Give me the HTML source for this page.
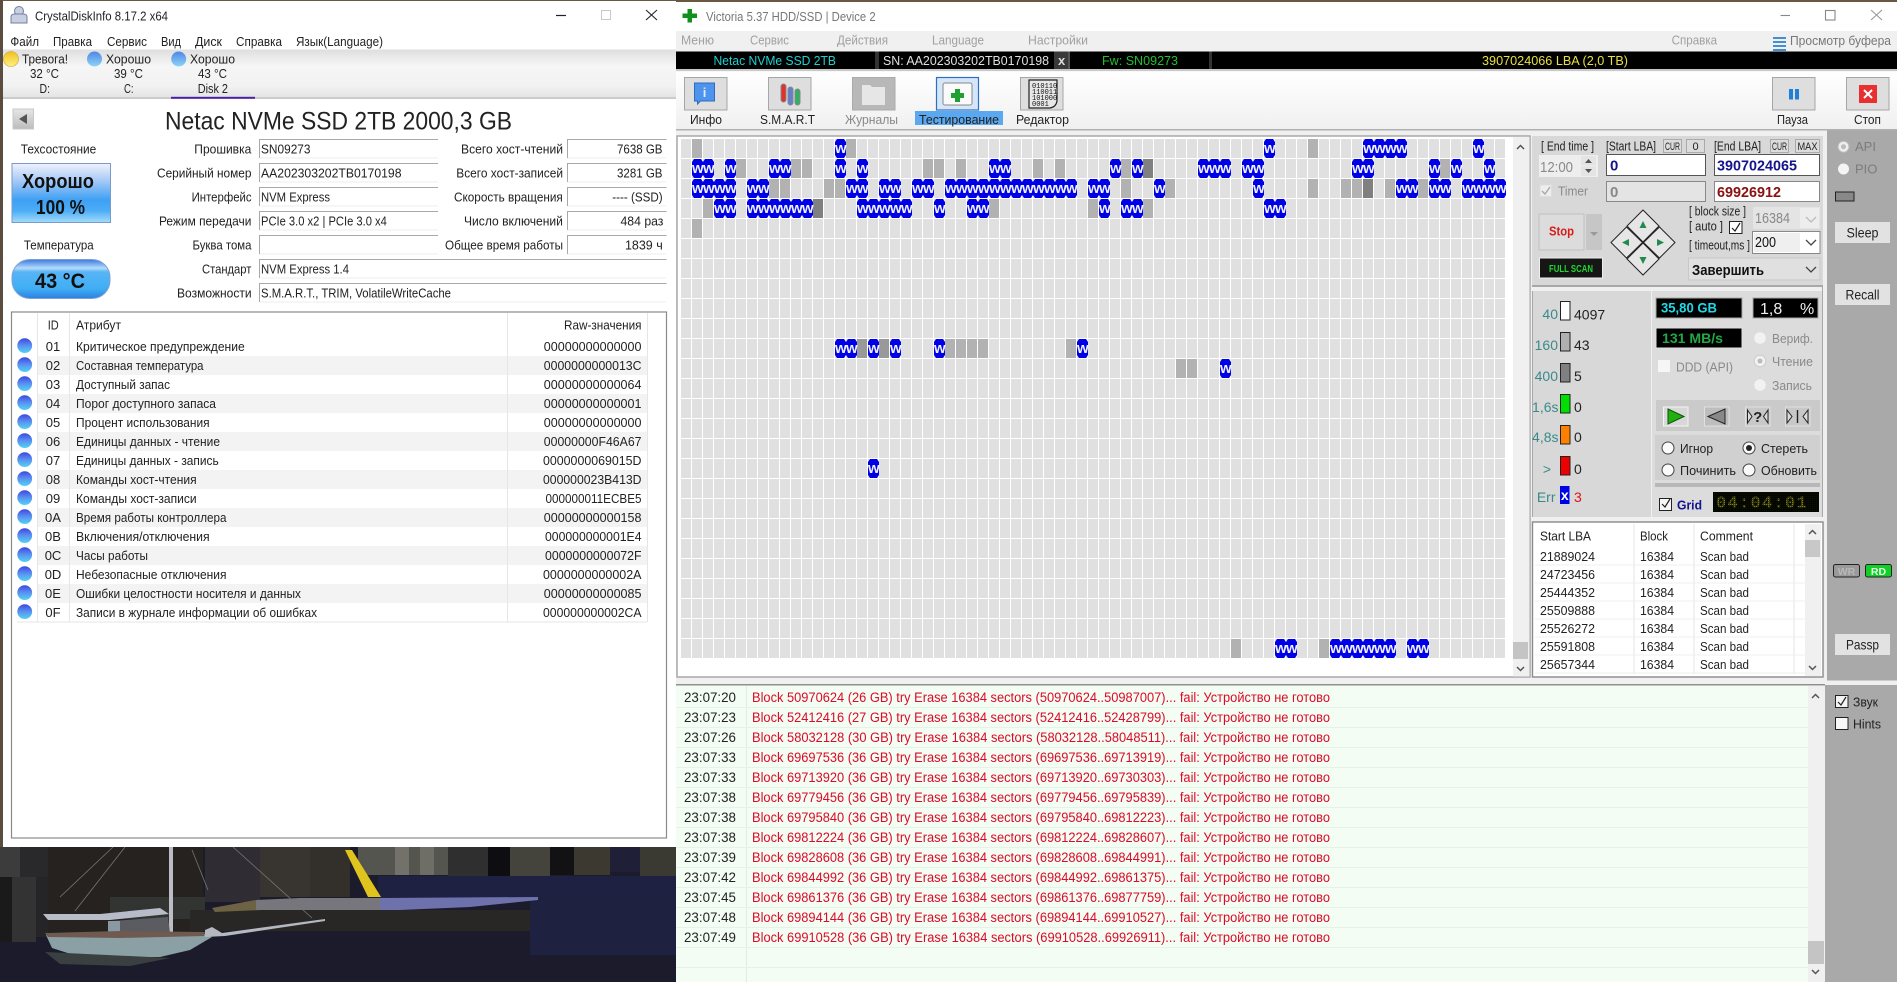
<!DOCTYPE html>
<html lang="ru"><head><meta charset="utf-8"><title>CrystalDiskInfo / Victoria</title>
<style>
html,body{margin:0;padding:0;background:#fff;overflow:hidden}
svg{display:block}
text{font-family:"Liberation Sans","Noto Sans CJK SC",sans-serif;font-size:13px;fill:#222;white-space:pre}
.w{font-size:15px;font-weight:bold;fill:#ecf0ff;letter-spacing:-.67px}
.g{fill:#b2b2b2}.d{fill:#808080}.m{fill:#999}
.c{text-anchor:middle}.e{text-anchor:end}
.b{font-weight:bold}
.gt{fill:#8a8a8a}
.t{fill:#3a8a8a;font-size:14px;text-anchor:end}
.v{font-size:14px;fill:#222}
.log{font-size:13.5px;fill:#dc0a28}
.tm{font-size:13.5px;fill:#222}
.mn{fill:#a0a0a0;font-size:13px}
.btn{fill:#dedede;stroke:#a6a6a6}
</style></head><body>
<svg xmlns="http://www.w3.org/2000/svg" width="1897" height="982" viewBox="0 0 1897 982">
<defs>
<pattern id="cell" width="11" height="20" patternUnits="userSpaceOnUse"><rect width="10" height="19" fill="#e0e0e0"/></pattern>
<pattern id="wc" width="11" height="20" patternUnits="userSpaceOnUse"><path d="M2 0H9L11 3V16L9 19H2L0 16V3Z" fill="#0000e6"/></pattern>
<pattern id="dots" width="2" height="2" patternUnits="userSpaceOnUse"><rect x="1" width="1" height="2" fill="#000"/><rect y="1" width="2" height="1" fill="#000"/></pattern>
<linearGradient id="tabs" x1="0" y1="0" x2="0" y2="1"><stop offset="0" stop-color="#dedede"/><stop offset=".35" stop-color="#f6f6f6"/><stop offset=".75" stop-color="#f2f2f2"/><stop offset="1" stop-color="#e4e4e4"/></linearGradient>
<linearGradient id="bl" x1="0" y1="0" x2="0" y2="1"><stop offset="0" stop-color="#3c48e0"/><stop offset=".5" stop-color="#5a90f0"/><stop offset="1" stop-color="#50d4f4"/></linearGradient>
<linearGradient id="bl2" x1="0" y1="0" x2="0" y2="1"><stop offset="0" stop-color="#4f86e4"/><stop offset="1" stop-color="#8cd4f8"/></linearGradient>
<linearGradient id="ye" x1="0" y1="0" x2="0" y2="1"><stop offset="0" stop-color="#f0c020"/><stop offset="1" stop-color="#fff080"/></linearGradient>
<linearGradient id="hl" x1="0" y1="0" x2="0" y2="1"><stop offset="0" stop-color="#f0f2fe"/><stop offset=".3" stop-color="#a4c8f6"/><stop offset=".62" stop-color="#3ea0f4"/><stop offset=".8" stop-color="#4cacf6"/><stop offset="1" stop-color="#a4dcfa"/></linearGradient>
<linearGradient id="tp" x1="0" y1="0" x2="0" y2="1"><stop offset="0" stop-color="#3a78e0"/><stop offset=".22" stop-color="#b4dcfa"/><stop offset=".32" stop-color="#58b4f6"/><stop offset=".75" stop-color="#40aef4"/><stop offset="1" stop-color="#2c80e0"/></linearGradient>
<linearGradient id="tb" x1="0" y1="0" x2="0" y2="1"><stop offset="0" stop-color="#fff"/><stop offset="1" stop-color="#f0f0f0"/></linearGradient>
<linearGradient id="bk" x1="0" y1="0" x2="0" y2="1"><stop offset="0" stop-color="#e6e6e6"/><stop offset="1" stop-color="#bcbcbc"/></linearGradient>
</defs>

<!-- desktop slivers -->
<rect width="1897" height="2" fill="#6b5844"/>
<rect y="0" width="3" height="847" fill="#5a4c3e"/>

<!-- wallpaper -->
<rect x="0" y="847" width="676" height="135" fill="#1c1b2c"/>
<rect x="0" y="847" width="20" height="30" fill="#3c3c3c"/>
<rect x="0" y="877" width="12" height="65" fill="#1a1a1a"/>
<rect x="12" y="877" width="24" height="65" fill="#333333"/>
<rect x="20" y="847" width="28" height="30" fill="#29292b"/>
<rect x="36" y="877" width="12" height="60" fill="#252527"/>
<rect x="48" y="847" width="155" height="85" fill="#262220"/>
<rect x="110" y="897" width="95" height="22" fill="#323431"/>
<rect x="205" y="847" width="55" height="55" fill="#2f2d33"/>
<rect x="260" y="847" width="50" height="50" fill="#38342f"/>
<rect x="310" y="847" width="40" height="50" fill="#332f2a"/>
<rect x="358" y="847" width="90" height="28" fill="#55554f"/>
<rect x="395" y="847" width="14" height="28" fill="#72726a"/>
<rect x="420" y="847" width="14" height="28" fill="#6e6e66"/>
<rect x="448" y="847" width="40" height="30" fill="#2f2f30"/>
<rect x="488" y="847" width="22" height="30" fill="#0e0e12"/>
<rect x="510" y="847" width="40" height="30" fill="#44443c"/>
<rect x="550" y="847" width="24" height="28" fill="#121214"/>
<rect x="574" y="847" width="36" height="28" fill="#3c3930"/>
<rect x="610" y="847" width="30" height="25" fill="#1f2038"/>
<rect x="640" y="847" width="36" height="30" fill="#3a3a32"/>
<rect x="378" y="876" width="298" height="22" fill="#1f2143"/>
<rect x="530" y="895" width="146" height="60" fill="#1f2140"/>
<rect x="190" y="910" width="340" height="21" fill="#282725"/>
<polygon points="212,908 256,900 262,910 215,912" fill="#6e6244"/>
<polygon points="256,900 300,898 380,898 380,910 256,910" fill="#77767c"/>
<polygon points="380,898 538,897 538,900 470,907 400,910 380,910" fill="#6e72ac"/>
<polygon points="345,850 352,850 381,897 368,897" fill="#e0c41e"/>
<rect x="169" y="847" width="4" height="85" fill="#bcbcc4"/>
<path d="M75 911 125 847M60 897 113 847M192 850 208 890M233 847 312 918" stroke="#77776f" stroke-width=".8" fill="none"/>
<polygon points="43,914 100,914 160,908 169,914 110,920 48,920" fill="#b8bcc8"/>
<polygon points="112,921 168,917 170,933 112,935" fill="#5a5c62"/>
<rect x="108" y="921" width="12" height="12" fill="#8a98a4"/>
<polygon points="46,935 120,933 205,934 212,937 190,950 160,957 80,957 52,948" fill="#8aa0a4"/>
<polygon points="45,933 120,931 205,932 204,936 120,938 48,937" fill="#6f5a50"/>
<polygon points="45,952 170,958 130,966 60,964" fill="#3a4040"/>
<polygon points="205,930 212,927 222,933 325,919 325,921 225,936 205,937" fill="#b4b8c0"/>

<!-- ===== CrystalDiskInfo window ===== -->
<rect x="3" y="1" width="673" height="846" fill="#fff"/>
<circle cx="19" cy="11" r="4.5" fill="#c8cfe0" stroke="#7080a0"/>
<path d="M11 23v-6q0-3 4-3h8q4 0 4 3v6z" fill="#c8cfe0" stroke="#7080a0"/>
<text x="35" y="20.5" textLength="133" lengthAdjust="spacingAndGlyphs">CrystalDiskInfo 8.17.2 x64</text>
<path d="M556 15.5H566" stroke="#222" stroke-width="1.2"/>
<rect x="601.5" y="10.5" width="9" height="9" fill="none" stroke="#c8c8c8"/>
<path d="M646 10 657 20M657 10 646 20" stroke="#222" stroke-width="1.1"/>

<text x="10.4" y="46" textLength="28.6" lengthAdjust="spacingAndGlyphs">Файл</text>
<text x="53" y="46" textLength="39" lengthAdjust="spacingAndGlyphs">Правка</text>
<text x="107" y="46" textLength="40" lengthAdjust="spacingAndGlyphs">Сервис</text>
<text x="161" y="46" textLength="20" lengthAdjust="spacingAndGlyphs">Вид</text>
<text x="195" y="46" textLength="27" lengthAdjust="spacingAndGlyphs">Диск</text>
<text x="236" y="46" textLength="46" lengthAdjust="spacingAndGlyphs">Справка</text>
<text x="296" y="46" textLength="87" lengthAdjust="spacingAndGlyphs">Язык(Language)</text>

<rect x="3" y="49.5" width="673" height="48" fill="url(#tabs)"/>
<rect x="3" y="97.5" width="673" height="1.2" fill="#b4b4b4"/>
<rect x="171" y="96.8" width="84" height="2" fill="#4a20a8"/>
<circle cx="11" cy="59" r="7.5" fill="url(#ye)" stroke="#c0a030" stroke-width=".6"/>
<circle cx="94.5" cy="59" r="7.5" fill="url(#bl2)"/>
<circle cx="178.7" cy="59" r="7.5" fill="url(#bl2)"/>
<text x="22" y="63.5" textLength="46" lengthAdjust="spacingAndGlyphs">Тревога!</text>
<text x="106" y="63.5" textLength="45" lengthAdjust="spacingAndGlyphs">Хорошо</text>
<text x="190" y="63.5" textLength="45" lengthAdjust="spacingAndGlyphs">Хорошо</text>
<text x="30" y="78" textLength="29" lengthAdjust="spacingAndGlyphs">32 °C</text>
<text x="114" y="78" textLength="29" lengthAdjust="spacingAndGlyphs">39 °C</text>
<text x="198" y="78" textLength="29" lengthAdjust="spacingAndGlyphs">43 °C</text>
<text x="39.5" y="93" textLength="10.5" lengthAdjust="spacingAndGlyphs">D:</text>
<text x="124" y="93" textLength="9.6" lengthAdjust="spacingAndGlyphs">C:</text>
<text x="197.7" y="93" textLength="30.3" lengthAdjust="spacingAndGlyphs">Disk 2</text>

<rect x="13" y="109" width="20.5" height="20" fill="url(#bk)" stroke="#c8c8c8"/>
<polygon points="19,119 27,114 27,124" fill="#555"/>
<text x="165" y="129.5" style="font-size:25px" textLength="347" lengthAdjust="spacingAndGlyphs">Netac NVMe SSD 2TB 2000,3 GB</text>

<text x="20.8" y="153.5" textLength="75.5" lengthAdjust="spacingAndGlyphs">Техсостояние</text>
<rect x="12" y="163.5" width="98.5" height="59" fill="url(#hl)" stroke="#7a9ac8"/>
<text x="22" y="188" class="b" style="font-size:20px;fill:#111" textLength="72" lengthAdjust="spacingAndGlyphs">Хорошо</text>
<text x="36" y="214" class="b" style="font-size:20px;fill:#111" textLength="49" lengthAdjust="spacingAndGlyphs">100 %</text>
<text x="23.9" y="249.5" textLength="69.8" lengthAdjust="spacingAndGlyphs">Температура</text>
<rect x="12" y="259.5" width="98" height="39" rx="18" fill="url(#tp)" stroke="#7aa0d4"/>
<text x="35" y="288" class="b" style="font-size:21px;fill:#111" textLength="50" lengthAdjust="spacingAndGlyphs">43 °C</text>

<g>
<text x="194.3" y="153.5" textLength="57" lengthAdjust="spacingAndGlyphs">Прошивка</text>
<text x="157" y="177.5" textLength="94.5" lengthAdjust="spacingAndGlyphs">Серийный номер</text>
<text x="191.6" y="201.5" textLength="60" lengthAdjust="spacingAndGlyphs">Интерфейс</text>
<text x="159" y="225.5" textLength="92.4" lengthAdjust="spacingAndGlyphs">Режим передачи</text>
<text x="192.5" y="249.5" textLength="59" lengthAdjust="spacingAndGlyphs">Буква тома</text>
<text x="202" y="273.5" textLength="49.4" lengthAdjust="spacingAndGlyphs">Стандарт</text>
<text x="177" y="297.5" textLength="74.6" lengthAdjust="spacingAndGlyphs">Возможности</text>
<text x="461" y="153.5" textLength="102" lengthAdjust="spacingAndGlyphs">Всего хост-чтений</text>
<text x="456.3" y="177.5" textLength="106.7" lengthAdjust="spacingAndGlyphs">Всего хост-записей</text>
<text x="454" y="201.5" textLength="108.8" lengthAdjust="spacingAndGlyphs">Скорость вращения</text>
<text x="464" y="225.5" textLength="98.9" lengthAdjust="spacingAndGlyphs">Число включений</text>
<text x="445" y="249.5" textLength="118" lengthAdjust="spacingAndGlyphs">Общее время работы</text>
</g>
<g fill="none" stroke="#a8a8a8">
<path d="M259.5 158V139.5H438M259.5 182V163.5H438M259.5 206V187.5H438M259.5 230V211.5H438M259.5 254V235.5H438M259.5 278V259.5H666.5M259.5 302V283.5H666.5"/>
<path d="M567.5 158V139.5H666.5M567.5 182V163.5H666.5M567.5 206V187.5H666.5M567.5 230V211.5H666.5M567.5 254V235.5H666.5"/>
</g>
<g stroke="#eeeeee" fill="none"><path d="M260 158H438M260 182H438M260 206H438M260 230H438M260 254H438M260 278H666M260 302H666M568 158H666M568 182H666M568 206H666M568 230H666M568 254H666"/></g>
<text x="261" y="153.5" textLength="49.5" lengthAdjust="spacingAndGlyphs">SN09273</text>
<text x="261" y="177.5" textLength="140.5" lengthAdjust="spacingAndGlyphs">AA202303202TB0170198</text>
<text x="261" y="201.5" textLength="69" lengthAdjust="spacingAndGlyphs">NVM Express</text>
<text x="261" y="225.5" textLength="125.8" lengthAdjust="spacingAndGlyphs">PCIe 3.0 x2 | PCIe 3.0 x4</text>
<text x="261" y="273.5" textLength="88" lengthAdjust="spacingAndGlyphs">NVM Express 1.4</text>
<text x="261" y="297.5" textLength="190" lengthAdjust="spacingAndGlyphs">S.M.A.R.T., TRIM, VolatileWriteCache</text>
<text x="617" y="153.5" textLength="45.5" lengthAdjust="spacingAndGlyphs">7638 GB</text>
<text x="617" y="177.5" textLength="45.5" lengthAdjust="spacingAndGlyphs">3281 GB</text>
<text x="612.3" y="201.5" textLength="50.3" lengthAdjust="spacingAndGlyphs">---- (SSD)</text>
<text x="620.5" y="225.5" textLength="42.9" lengthAdjust="spacingAndGlyphs">484 раз</text>
<text x="625" y="249.5" textLength="37.7" lengthAdjust="spacingAndGlyphs">1839 ч</text>

<!-- SMART table -->
<rect x="11.5" y="312" width="655" height="526" fill="#fff" stroke="#8a8a8a" stroke-width="1.2"/>
<g fill="#f3f3f3"><rect x="38" y="356" width="609" height="19"/><rect x="38" y="394" width="609" height="19"/><rect x="38" y="432" width="609" height="19"/><rect x="38" y="470" width="609" height="19"/><rect x="38" y="508" width="609" height="19"/><rect x="38" y="546" width="609" height="19"/><rect x="38" y="584" width="609" height="19"/></g>
<path d="M37.5 313V622M69.5 313V622M507.5 313V622M647.5 313V622M17 622H647" stroke="#e6e6e6" fill="none"/>
<text x="47.7" y="329.5" textLength="11" lengthAdjust="spacingAndGlyphs">ID</text>
<text x="76" y="329.5" textLength="45" lengthAdjust="spacingAndGlyphs">Атрибут</text>
<text x="564" y="329.5" textLength="77.5" lengthAdjust="spacingAndGlyphs">Raw-значения</text>
<g fill="url(#bl)">
<circle cx="24.7" cy="345.6" r="7.4"/><circle cx="24.7" cy="364.6" r="7.4"/><circle cx="24.7" cy="383.6" r="7.4"/><circle cx="24.7" cy="402.6" r="7.4"/><circle cx="24.7" cy="421.6" r="7.4"/><circle cx="24.7" cy="440.6" r="7.4"/><circle cx="24.7" cy="459.6" r="7.4"/><circle cx="24.7" cy="478.6" r="7.4"/><circle cx="24.7" cy="497.6" r="7.4"/><circle cx="24.7" cy="516.6" r="7.4"/><circle cx="24.7" cy="535.6" r="7.4"/><circle cx="24.7" cy="554.6" r="7.4"/><circle cx="24.7" cy="573.6" r="7.4"/><circle cx="24.7" cy="592.6" r="7.4"/><circle cx="24.7" cy="611.6" r="7.4"/>
</g>
<g>
<text x="53" y="351" class="c">01</text><text x="53" y="370" class="c">02</text><text x="53" y="389" class="c">03</text><text x="53" y="408" class="c">04</text><text x="53" y="427" class="c">05</text><text x="53" y="446" class="c">06</text><text x="53" y="465" class="c">07</text><text x="53" y="484" class="c">08</text><text x="53" y="503" class="c">09</text><text x="53" y="522" class="c">0A</text><text x="53" y="541" class="c">0B</text><text x="53" y="560" class="c">0C</text><text x="53" y="579" class="c">0D</text><text x="53" y="598" class="c">0E</text><text x="53" y="617" class="c">0F</text>
</g>
<text x="76" y="351" textLength="168.7" lengthAdjust="spacingAndGlyphs">Критическое предупреждение</text>
<text x="76" y="370" textLength="127.5" lengthAdjust="spacingAndGlyphs">Составная температура</text>
<text x="76" y="389" textLength="94" lengthAdjust="spacingAndGlyphs">Доступный запас</text>
<text x="76" y="408" textLength="140" lengthAdjust="spacingAndGlyphs">Порог доступного запаса</text>
<text x="76" y="427" textLength="133.6" lengthAdjust="spacingAndGlyphs">Процент использования</text>
<text x="76" y="446" textLength="144" lengthAdjust="spacingAndGlyphs">Единицы данных - чтение</text>
<text x="76" y="465" textLength="142.7" lengthAdjust="spacingAndGlyphs">Единицы данных - запись</text>
<text x="76" y="484" textLength="120.6" lengthAdjust="spacingAndGlyphs">Команды хост-чтения</text>
<text x="76" y="503" textLength="120.6" lengthAdjust="spacingAndGlyphs">Команды хост-записи</text>
<text x="76" y="522" textLength="150.5" lengthAdjust="spacingAndGlyphs">Время работы контроллера</text>
<text x="76" y="541" textLength="133.6" lengthAdjust="spacingAndGlyphs">Включения/отключения</text>
<text x="76" y="560" textLength="72" lengthAdjust="spacingAndGlyphs">Часы работы</text>
<text x="76" y="579" textLength="150.5" lengthAdjust="spacingAndGlyphs">Небезопасные отключения</text>
<text x="76" y="598" textLength="225" lengthAdjust="spacingAndGlyphs">Ошибки целостности носителя и данных</text>
<text x="76" y="617" textLength="241" lengthAdjust="spacingAndGlyphs">Записи в журнале информации об ошибках</text>
<text x="543.800" y="351" textLength="97.7" lengthAdjust="spacingAndGlyphs">00000000000000</text>
<text x="543.800" y="370" textLength="97.7" lengthAdjust="spacingAndGlyphs">0000000000013C</text>
<text x="543.800" y="389" textLength="97.7" lengthAdjust="spacingAndGlyphs">00000000000064</text>
<text x="543.800" y="408" textLength="97.7" lengthAdjust="spacingAndGlyphs">00000000000001</text>
<text x="543.800" y="427" textLength="97.7" lengthAdjust="spacingAndGlyphs">00000000000000</text>
<text x="543.800" y="446" textLength="97.7" lengthAdjust="spacingAndGlyphs">00000000F46A67</text>
<text x="543" y="465" textLength="98.5" lengthAdjust="spacingAndGlyphs">0000000069015D</text>
<text x="543" y="484" textLength="98.5" lengthAdjust="spacingAndGlyphs">000000023B413D</text>
<text x="545.500" y="503" textLength="96" lengthAdjust="spacingAndGlyphs">000000011ECBE5</text>
<text x="543.800" y="522" textLength="97.7" lengthAdjust="spacingAndGlyphs">00000000000158</text>
<text x="545" y="541" textLength="96.500" lengthAdjust="spacingAndGlyphs">000000000001E4</text>
<text x="545" y="560" textLength="96.500" lengthAdjust="spacingAndGlyphs">0000000000072F</text>
<text x="543" y="579" textLength="98.5" lengthAdjust="spacingAndGlyphs">0000000000002A</text>
<text x="543.800" y="598" textLength="97.7" lengthAdjust="spacingAndGlyphs">00000000000085</text>
<text x="543" y="617" textLength="98.5" lengthAdjust="spacingAndGlyphs">000000000002CA</text>

<!-- ===== Victoria window ===== -->
<rect x="676" y="2" width="1221" height="980" fill="#f0f0f0"/>
<rect x="676" y="2" width="1221" height="29" fill="#fff"/>
<path d="M687.5 9h4.5v4.5h5v4.500h-5v4.500h-4.500v-4.500h-5v-4.500h5z" fill="#10901c"/>
<text x="706" y="21" style="fill:#777" textLength="169.600" lengthAdjust="spacingAndGlyphs">Victoria 5.37 HDD/SSD | Device 2</text>
<path d="M1780.600 15.500H1790" stroke="#888" stroke-width="1.100"/>
<rect x="1825.500" y="10.500" width="9.500" height="9.500" fill="none" stroke="#888" stroke-width="1.100"/>
<path d="M1871 10 1882 20M1882 10 1871 20" stroke="#999" stroke-width="1.100"/>
<text x="681" y="44.500" class="mn" textLength="33" lengthAdjust="spacingAndGlyphs">Меню</text>
<text x="750" y="44.500" class="mn" textLength="39" lengthAdjust="spacingAndGlyphs">Сервис</text>
<text x="837" y="44.500" class="mn" textLength="51" lengthAdjust="spacingAndGlyphs">Действия</text>
<text x="932" y="44.500" class="mn" textLength="52" lengthAdjust="spacingAndGlyphs">Language</text>
<text x="1028" y="44.500" class="mn" textLength="60" lengthAdjust="spacingAndGlyphs">Настройки</text>
<text x="1671.600" y="44.500" class="mn" textLength="45.500" lengthAdjust="spacingAndGlyphs">Справка</text>
<path d="M1773 38h13M1773 42h13M1773 46h13M1773 50h13" stroke="#2c80d0" stroke-width="1.800"/>
<text x="1790" y="45" style="fill:#777" textLength="101" lengthAdjust="spacingAndGlyphs">Просмотр буфера</text>

<rect x="676" y="51.500" width="1221" height="17.500" fill="#000"/>
<rect x="875" y="51.500" width="4" height="17.500" fill="#333"/>
<rect x="1054" y="51.500" width="14" height="17.500" fill="#3a3a3a"/>
<rect x="1068" y="51.500" width="2" height="17.500" fill="#555"/>
<rect x="1209" y="51.500" width="3" height="17.500" fill="#333"/>
<text x="713.500" y="65" style="fill:#20d0d0" textLength="122.500" lengthAdjust="spacingAndGlyphs">Netac NVMe SSD 2TB</text>
<text x="883" y="65" style="fill:#e0e0e0" textLength="166" lengthAdjust="spacingAndGlyphs">SN: AA202303202TB0170198</text>
<text x="1058" y="65" class="b" style="fill:#ddd">x</text>
<text x="1102" y="65" style="fill:#22c030" textLength="76" lengthAdjust="spacingAndGlyphs">Fw: SN09273</text>
<text x="1482" y="65" style="fill:#e8e040" textLength="146" lengthAdjust="spacingAndGlyphs">3907024066 LBA (2,0 TB)</text>

<rect x="676" y="71.500" width="1221" height="57.500" fill="url(#tb)"/>
<rect x="676" y="69" width="1221" height="2" fill="#c8c8c8"/>
<rect x="676" y="129" width="1221" height="1.500" fill="#b0b0b0"/>

<!-- toolbar buttons -->
<rect x="684.500" y="77.500" width="42.500" height="32.500" class="btn"/>
<path d="M694.500 83h20v18h-14l-3 3v-3h-3z" fill="#4f94ec" stroke="#2c6cc0"/>
<text x="704.500" y="97" class="c b" style="fill:#dcecff;font-size:13px">i</text>
<text x="690" y="124" textLength="32" lengthAdjust="spacingAndGlyphs">Инфо</text>

<rect x="768.500" y="77.500" width="42.500" height="32.500" class="btn"/>
<rect x="781" y="84" width="5" height="18" rx="2.500" fill="#e03030" stroke="#888"/>
<rect x="788" y="87" width="5" height="18" rx="2.500" fill="#6080d0" stroke="#888"/>
<rect x="795" y="89" width="5" height="16" rx="2.500" fill="#30b060" stroke="#888"/>
<text x="760" y="124" textLength="55" lengthAdjust="spacingAndGlyphs">S.M.A.R.T</text>

<rect x="852.500" y="77.500" width="42.500" height="32.500" fill="#b8b8b8" stroke="#aaa"/>
<path d="M862 85h8l2 2h13v18h-23z" fill="#e6e6e6"/>
<text x="845" y="124" style="fill:#888" textLength="53" lengthAdjust="spacingAndGlyphs">Журналы</text>

<rect x="936.500" y="77.500" width="42" height="32.500" fill="#d4e6f8" stroke="#2c70c0" stroke-width="1.200"/>
<rect x="943" y="83" width="29" height="22" rx="2" fill="#fafafa" stroke="#888"/>
<path d="M955 89h5v4h4v5h-4v4h-5v-4h-4v-5h4z" fill="#20a030"/>
<rect x="915" y="111" width="88" height="14" fill="#5aa8f0"/>
<text x="919" y="124" textLength="80" lengthAdjust="spacingAndGlyphs">Тестирование</text>

<rect x="1020.500" y="77.500" width="42.500" height="32.500" class="btn"/>
<path d="M1029 80h28v21q-1 6-7 7h-21z" fill="#e8e8e8" stroke="#222" stroke-width="1.200"/>
<text x="1032" y="88" style="font-size:7px;font-family:'Liberation Mono',monospace;fill:#111">010110</text>
<text x="1032" y="94" style="font-size:7px;font-family:'Liberation Mono',monospace;fill:#111">110011</text>
<text x="1032" y="100" style="font-size:7px;font-family:'Liberation Mono',monospace;fill:#111">101000</text>
<text x="1032" y="106" style="font-size:7px;font-family:'Liberation Mono',monospace;fill:#111">0001</text>
<text x="1016" y="124" textLength="53" lengthAdjust="spacingAndGlyphs">Редактор</text>

<rect x="1772.500" y="77.500" width="42.500" height="32.500" class="btn"/>
<rect x="1789" y="89" width="4" height="10.500" fill="#2080d8"/>
<rect x="1795" y="89" width="4" height="10.500" fill="#2080d8"/>
<text x="1777" y="124" textLength="31" lengthAdjust="spacingAndGlyphs">Пауза</text>
<rect x="1846.500" y="77.500" width="42.500" height="32.500" class="btn"/>
<rect x="1859" y="85" width="18" height="18" fill="#e83030"/>
<path d="M1864 90 1872 98M1872 90 1864 98" stroke="#fff" stroke-width="2"/>
<text x="1854" y="124" textLength="27" lengthAdjust="spacingAndGlyphs">Стоп</text>

<!-- grid panel -->
<rect x="677" y="136" width="853" height="541" fill="#fff" stroke="#a8a8a8" stroke-width="1.500"/>
<rect x="1513" y="137" width="16.500" height="539.500" fill="#f0f0f0"/>
<path d="M1517 149l3.500-3.500 3.500 3.500" fill="none" stroke="#555" stroke-width="1.500"/>
<path d="M1517 667l3.500 3.500 3.500-3.500" fill="none" stroke="#555" stroke-width="1.500"/>
<rect x="1513" y="642" width="15" height="17" fill="#c4c4c4"/>

<g transform="translate(681 139)">
<rect width="825" height="519" fill="url(#cell)"/>
<!-- gray cells -->
<g class="g">
<rect x="11" y="0" width="10" height="19"/><rect x="165" y="0" width="10" height="19"/><rect x="627" y="0" width="10" height="19"/>
<rect x="55" y="20" width="10" height="19"/><rect x="110" y="20" width="10" height="19"/><rect x="121" y="20" width="10" height="19"/><rect x="242" y="20" width="10" height="19"/><rect x="253" y="20" width="10" height="19"/><rect x="275" y="20" width="10" height="19"/><rect x="352" y="20" width="10" height="19"/><rect x="374" y="20" width="10" height="19"/><rect x="440" y="20" width="10" height="19"/><rect x="759" y="20" width="10" height="19"/>
<rect x="88" y="40" width="10" height="19"/><rect x="99" y="40" width="10" height="19"/><rect x="143" y="40" width="10" height="19"/><rect x="154" y="40" width="10" height="19"/><rect x="440" y="40" width="10" height="19"/><rect x="484" y="40" width="10" height="19"/><rect x="627" y="40" width="10" height="19"/><rect x="660" y="40" width="10" height="19"/><rect x="671" y="40" width="10" height="19"/><rect x="704" y="40" width="10" height="19"/><rect x="737" y="40" width="10" height="19"/>
<rect x="22" y="60" width="10" height="19"/><rect x="308" y="60" width="10" height="19"/><rect x="407" y="60" width="10" height="19"/><rect x="462" y="60" width="10" height="19"/>
<rect x="11" y="80" width="10" height="19"/>
<rect x="264" y="200" width="10" height="19"/><rect x="275" y="200" width="10" height="19"/><rect x="286" y="200" width="10" height="19"/><rect x="297" y="200" width="10" height="19"/><rect x="385" y="200" width="10" height="19"/>
<rect x="495" y="220" width="10" height="19"/><rect x="506" y="220" width="10" height="19"/>
<rect x="550" y="500" width="10" height="19"/><rect x="638" y="500" width="10" height="19"/>
</g>
<g class="d"><rect x="462" y="20" width="10" height="19"/><rect x="682" y="40" width="10" height="19"/><rect x="132" y="60" width="10" height="19"/></g>
<g class="m"><rect x="176" y="200" width="10" height="19"/><rect x="198" y="200" width="10" height="19"/></g>
<!-- W runs -->
<g fill="url(#wc)">
<rect x="154" y="0" width="11" height="19"/><rect x="583" y="0" width="11" height="19"/><rect x="682" y="0" width="44" height="19"/><rect x="792" y="0" width="11" height="19"/>
<rect x="11" y="20" width="22" height="19"/><rect x="44" y="20" width="11" height="19"/><rect x="88" y="20" width="22" height="19"/><rect x="154" y="20" width="11" height="19"/><rect x="176" y="20" width="11" height="19"/><rect x="308" y="20" width="22" height="19"/><rect x="429" y="20" width="11" height="19"/><rect x="451" y="20" width="11" height="19"/><rect x="517" y="20" width="33" height="19"/><rect x="561" y="20" width="22" height="19"/><rect x="671" y="20" width="22" height="19"/><rect x="748" y="20" width="11" height="19"/><rect x="770" y="20" width="11" height="19"/><rect x="803" y="20" width="11" height="19"/>
<rect x="11" y="40" width="44" height="19"/><rect x="66" y="40" width="22" height="19"/><rect x="165" y="40" width="22" height="19"/><rect x="198" y="40" width="22" height="19"/><rect x="231" y="40" width="22" height="19"/><rect x="264" y="40" width="132" height="19"/><rect x="407" y="40" width="22" height="19"/><rect x="473" y="40" width="11" height="19"/><rect x="572" y="40" width="11" height="19"/><rect x="715" y="40" width="22" height="19"/><rect x="748" y="40" width="22" height="19"/><rect x="781" y="40" width="44" height="19"/>
<rect x="33" y="60" width="22" height="19"/><rect x="66" y="60" width="66" height="19"/><rect x="176" y="60" width="55" height="19"/><rect x="253" y="60" width="11" height="19"/><rect x="286" y="60" width="22" height="19"/><rect x="418" y="60" width="11" height="19"/><rect x="440" y="60" width="22" height="19"/><rect x="583" y="60" width="22" height="19"/>
<rect x="154" y="200" width="22" height="19"/><rect x="187" y="200" width="11" height="19"/><rect x="209" y="200" width="11" height="19"/><rect x="253" y="200" width="11" height="19"/><rect x="396" y="200" width="11" height="19"/>
<rect x="539" y="220" width="11" height="19"/>
<rect x="187" y="320" width="11" height="19"/>
<rect x="594" y="500" width="22" height="19"/><rect x="649" y="500" width="66" height="19"/><rect x="726" y="500" width="22" height="19"/>
</g>
<g>
<text class="w" x="154" y="14">w</text><text class="w" x="583" y="14">w</text><text class="w" x="682" y="14">wwww</text><text class="w" x="792" y="14">w</text>
<text class="w" x="11" y="34">ww</text><text class="w" x="44" y="34">w</text><text class="w" x="88" y="34">ww</text><text class="w" x="154" y="34">w</text><text class="w" x="176" y="34">w</text><text class="w" x="308" y="34">ww</text><text class="w" x="429" y="34">w</text><text class="w" x="451" y="34">w</text><text class="w" x="517" y="34">www</text><text class="w" x="561" y="34">ww</text><text class="w" x="671" y="34">ww</text><text class="w" x="748" y="34">w</text><text class="w" x="770" y="34">w</text><text class="w" x="803" y="34">w</text>
<text class="w" x="11" y="54">wwww</text><text class="w" x="66" y="54">ww</text><text class="w" x="165" y="54">ww</text><text class="w" x="198" y="54">ww</text><text class="w" x="231" y="54">ww</text><text class="w" x="264" y="54">wwwwwwwwwwww</text><text class="w" x="407" y="54">ww</text><text class="w" x="473" y="54">w</text><text class="w" x="572" y="54">w</text><text class="w" x="715" y="54">ww</text><text class="w" x="748" y="54">ww</text><text class="w" x="781" y="54">wwww</text>
<text class="w" x="33" y="74">ww</text><text class="w" x="66" y="74">wwwwww</text><text class="w" x="176" y="74">wwwww</text><text class="w" x="253" y="74">w</text><text class="w" x="286" y="74">ww</text><text class="w" x="418" y="74">w</text><text class="w" x="440" y="74">ww</text><text class="w" x="583" y="74">ww</text>
<text class="w" x="154" y="214">ww</text><text class="w" x="187" y="214">w</text><text class="w" x="209" y="214">w</text><text class="w" x="253" y="214">w</text><text class="w" x="396" y="214">w</text>
<text class="w" x="539" y="234">w</text>
<text class="w" x="187" y="334">w</text>
<text class="w" x="594" y="514">ww</text><text class="w" x="649" y="514">wwwwww</text><text class="w" x="726" y="514">ww</text>
</g>
</g>

<!-- controls panel -->
<rect x="1532" y="136" width="291" height="150" fill="#d8d8d8"/>
<rect x="1532" y="285" width="291" height="2" fill="#a8a8a8"/>
<text x="1541" y="150.500" textLength="53" lengthAdjust="spacingAndGlyphs">[ End time ]</text>
<text x="1606" y="150.500" textLength="50" lengthAdjust="spacingAndGlyphs">[Start LBA]</text>
<text x="1714" y="150.500" textLength="47" lengthAdjust="spacingAndGlyphs">[End LBA]</text>
<g fill="#dcdcdc" stroke="#aaa"><rect x="1663.500" y="139.500" width="18" height="13"/><rect x="1686.500" y="139.500" width="18" height="13"/><rect x="1770.500" y="139.500" width="18" height="13"/><rect x="1795.500" y="139.500" width="24" height="13"/></g>
<text x="1672.500" y="150" class="c" style="font-size:11px" textLength="15" lengthAdjust="spacingAndGlyphs">CUR</text>
<text x="1695.500" y="150" class="c" style="font-size:11px">0</text>
<text x="1779.500" y="150" class="c" style="font-size:11px" textLength="15" lengthAdjust="spacingAndGlyphs">CUR</text>
<text x="1807.500" y="150" class="c" style="font-size:11px" textLength="20" lengthAdjust="spacingAndGlyphs">MAX</text>
<rect x="1539" y="155" width="59" height="22" fill="#eeeeee"/>
<text x="1540" y="172" style="font-size:15px;fill:#8a8a8a" textLength="33" lengthAdjust="spacingAndGlyphs">12:00</text>
<rect x="1581" y="156" width="15" height="9.500" fill="#e4e4e4"/><rect x="1581" y="166.500" width="15" height="9.500" fill="#e4e4e4"/>
<polygon points="1585,163 1588.500,159 1592,163" fill="#555"/><polygon points="1585,169 1588.500,173 1592,169" fill="#555"/>
<rect x="1606.500" y="154.500" width="99" height="21" fill="#fff" stroke="#555"/>
<rect x="1714.500" y="154.500" width="105" height="21" fill="#fff" stroke="#555"/>
<text x="1610" y="170.500" class="b" style="font-size:15px;fill:#14148c">0</text>
<text x="1717" y="170.500" class="b" style="font-size:15px;fill:#14148c" textLength="80" lengthAdjust="spacingAndGlyphs">3907024065</text>
<rect x="1540" y="185" width="11.500" height="11.500" fill="#eee" stroke="#ddd"/>
<path d="M1542 191l3 3 5-7" fill="none" stroke="#aaa" stroke-width="1.400"/>
<text x="1558" y="195.500" class="gt" textLength="30" lengthAdjust="spacingAndGlyphs">Timer</text>
<rect x="1606.500" y="181.500" width="99" height="20" fill="#e4e4e4" stroke="#888"/>
<rect x="1714.500" y="181.500" width="105" height="20" fill="#fff" stroke="#888"/>
<text x="1610" y="197" class="b" style="font-size:15px;fill:#888">0</text>
<text x="1717" y="197" class="b" style="font-size:15px;fill:#8b1010" textLength="64" lengthAdjust="spacingAndGlyphs">69926912</text>
<rect x="1539" y="214" width="45" height="36" fill="#dcdcdc" stroke="#c0c0c0"/>
<text x="1549" y="235.500" class="b" style="fill:#d81c1c" textLength="25" lengthAdjust="spacingAndGlyphs">Stop</text>
<rect x="1586" y="214" width="16" height="36" fill="#c6c6c6"/>
<polygon points="1590,232 1598,232 1594,236" fill="#999"/>
<rect x="1539.500" y="258" width="63" height="20" fill="#161616" stroke="#eee"/>
<text x="1549" y="272" class="b" style="font-size:10.500px;fill:#20d830" textLength="44" lengthAdjust="spacingAndGlyphs">FULL SCAN</text>
<g fill="#e6e6e6" stroke="#222" stroke-width="1">
<polygon points="1643,210 1659,226 1643,242 1627,226"/>
<polygon points="1626.500,227 1642.500,242.500 1626.500,258 1611,242.500"/>
<polygon points="1659.500,227 1675,242.500 1659.500,258 1643.500,242.500"/>
<polygon points="1643,243 1659,259 1643,275 1627,259"/>
</g>
<g fill="#208a50"><polygon points="1643,221 1639.500,228 1646.500,228"/><polygon points="1622,242.500 1629,239 1629,246"/><polygon points="1664,242.500 1657,239 1657,246"/><polygon points="1643,264 1639.500,257 1646.500,257"/></g>
<text x="1689" y="215.500" textLength="57" lengthAdjust="spacingAndGlyphs">[ block size ]</text>
<text x="1689" y="230.500" textLength="34" lengthAdjust="spacingAndGlyphs">[ auto ]</text>
<rect x="1729.500" y="221.500" width="12.500" height="12" fill="#fff" stroke="#222"/>
<path d="M1732 228l3 3 5-8" fill="none" stroke="#222" stroke-width="1.200"/>
<text x="1689" y="249.500" textLength="61" lengthAdjust="spacingAndGlyphs">[ timeout,ms ]</text>
<rect x="1753" y="207" width="67" height="22" fill="#e4e4e4"/>
<rect x="1800" y="208" width="19" height="20" fill="#ededed"/>
<text x="1755" y="223" style="font-size:14.500px;fill:#888" textLength="35" lengthAdjust="spacingAndGlyphs">16384</text>
<path d="M1806 217l5 5 5-5" fill="none" stroke="#bbb" stroke-width="1.300"/>
<rect x="1752.500" y="231.500" width="67.500" height="22" fill="#fff" stroke="#888"/>
<rect x="1754" y="233" width="46" height="19" fill="#efefef"/>
<text x="1755" y="247" style="font-size:14.500px;fill:#111" textLength="21" lengthAdjust="spacingAndGlyphs">200</text>
<path d="M1806 240l5 5 5-5" fill="none" stroke="#444" stroke-width="1.300"/>
<rect x="1688.500" y="258" width="131.500" height="22" fill="#e0e0e0" stroke="#c8c8c8"/>
<text x="1692" y="275" class="b" style="font-size:14.500px;fill:#111" textLength="72" lengthAdjust="spacingAndGlyphs">Завершить</text>
<path d="M1806 267l5 5 5-5" fill="none" stroke="#444" stroke-width="1.300"/>

<!-- side column -->
<rect x="1827" y="130.500" width="70" height="550" fill="#a9a9a9"/>
<rect x="1825" y="685" width="72" height="297" fill="#a9a9a9"/>
<circle cx="1843.500" cy="146.700" r="5.500" fill="#eee" stroke="#bbb" stroke-width="1"/><circle cx="1843.500" cy="146.700" r="2.500" fill="#bbb"/>
<circle cx="1843.500" cy="169" r="5.500" fill="#f4f4f4"/>
<text x="1855" y="151" style="fill:#7c7c7c;font-size:13px">API</text>
<text x="1855" y="173.500" style="fill:#7c7c7c;font-size:13px">PIO</text>
<rect x="1835.500" y="192" width="18.500" height="9" fill="#888" stroke="#222"/>
<rect x="1835" y="222" width="55" height="21" fill="#e2e2e2"/>
<text x="1862.500" y="237.500" class="c" style="font-size:14px" textLength="32" lengthAdjust="spacingAndGlyphs">Sleep</text>
<rect x="1835" y="284" width="55" height="21" fill="#e2e2e2"/>
<text x="1862.500" y="299.500" class="c" style="font-size:14px" textLength="34" lengthAdjust="spacingAndGlyphs">Recall</text>
<rect x="1833.500" y="564.500" width="26" height="12.500" rx="2" fill="#9a9a9a" stroke="#222"/>
<text x="1846.500" y="575" class="c b" style="font-size:10.500px;fill:#b8b8b8">WR</text>
<rect x="1865.500" y="564.500" width="26" height="12.500" rx="2" fill="#10d028" stroke="#222"/>
<text x="1878.500" y="575" class="c b" style="font-size:10.500px;fill:#e8ffe8">RD</text>
<rect x="1835" y="634" width="55" height="21" fill="#e2e2e2"/>
<text x="1862.500" y="649.500" class="c" style="font-size:14px" textLength="33" lengthAdjust="spacingAndGlyphs">Passp</text>
<rect x="1835.500" y="695.500" width="12.500" height="12" fill="#f4f4f4" stroke="#222"/>
<path d="M1838 702l3 3 5-8" fill="none" stroke="#222" stroke-width="1.200"/>
<text x="1853" y="706.500" textLength="25" lengthAdjust="spacingAndGlyphs">Звук</text>
<rect x="1835.500" y="717.500" width="12.500" height="12" fill="#f8f8f8" stroke="#222"/>
<text x="1853" y="728.500" textLength="28" lengthAdjust="spacingAndGlyphs">Hints</text>

<!-- stats panels -->
<rect x="1532" y="291" width="119" height="226" fill="#d8d8d8"/>
<rect x="1652" y="291" width="171" height="226" fill="#dcdcdc"/>
<path d="M1532.500 291V517M1822.500 287V517" stroke="#a8a8a8" fill="none"/>
<text x="1558" y="319" class="t">40</text><text x="1558" y="350" class="t">160</text><text x="1558" y="381" class="t">400</text><text x="1558.500" y="412" class="t">1,6s</text><text x="1558.500" y="442" class="t">4,8s</text><text x="1551" y="474" class="t">&gt;</text><text x="1555.500" y="502" class="t">Err</text>
<rect x="1560.500" y="301.500" width="9.500" height="18.500" fill="#fff" stroke="#222"/>
<rect x="1560.500" y="332.500" width="9.500" height="18.500" fill="#b0b0b0" stroke="#222"/>
<rect x="1560.500" y="363.500" width="9.500" height="18.500" fill="#808080" stroke="#222"/>
<rect x="1560.500" y="394.500" width="9.500" height="18.500" fill="#00e000" stroke="#222"/>
<rect x="1560.500" y="425.500" width="9.500" height="18.500" fill="#ff8000" stroke="#222"/>
<rect x="1560.500" y="456.500" width="9.500" height="18.500" fill="#ee0000" stroke="#222"/>
<rect x="1560" y="486" width="9.500" height="18" fill="#0000e6"/>
<text x="1564.800" y="500" class="c b" style="fill:#fff;font-size:14px">x</text>
<text x="1574" y="319.500" class="v">4097</text><text x="1574" y="350" class="v">43</text><text x="1574" y="381" class="v">5</text><text x="1574" y="412" class="v">0</text><text x="1574" y="442" class="v">0</text><text x="1574" y="474" class="v">0</text><text x="1574" y="502" class="v" style="fill:#e01010">3</text>

<rect x="1656" y="298" width="86" height="20" fill="#000" stroke="#a8a8a8"/>
<text x="1661" y="312.500" class="b" style="fill:#20d8e8;font-size:14px" textLength="56" lengthAdjust="spacingAndGlyphs">35,80 GB</text>
<rect x="1753" y="298" width="65" height="20" fill="#000" stroke="#a8a8a8"/>
<text x="1760" y="314" style="fill:#f0f0f0;font-size:16px">1,8</text>
<text x="1800" y="314" style="fill:#f0f0f0;font-size:16px">%</text>
<rect x="1656" y="328" width="86" height="20" fill="#000" stroke="#e0e0e0"/>
<text x="1662" y="343" class="b" style="fill:#22a844;font-size:14px" textLength="61" lengthAdjust="spacingAndGlyphs">131 MB/s</text>
<circle cx="1760" cy="338" r="5.800" fill="#f2f2f2"/><circle cx="1760" cy="361" r="5.800" fill="#f2f2f2" stroke="#ccc"/><circle cx="1760" cy="361" r="2.500" fill="#bbb"/><circle cx="1760" cy="385" r="5.800" fill="#f2f2f2"/>
<text x="1772" y="343" class="gt" textLength="41" lengthAdjust="spacingAndGlyphs">Вериф.</text>
<text x="1772" y="366" class="gt" textLength="41" lengthAdjust="spacingAndGlyphs">Чтение</text>
<text x="1772" y="390" class="gt" textLength="40" lengthAdjust="spacingAndGlyphs">Запись</text>
<rect x="1658" y="360" width="12" height="12" fill="#f6f6f6"/>
<text x="1676" y="371.500" class="gt" textLength="57" lengthAdjust="spacingAndGlyphs">DDD (API)</text>

<rect x="1656" y="400" width="164" height="31" fill="#cacaca"/>
<rect x="1663.500" y="407" width="24.500" height="19" fill="#d8d8d8" stroke="#f4f4f4"/>
<polygon points="1668,409 1684,416.500 1668,424" fill="#20b010" stroke="#105010"/>
<rect x="1704.500" y="407" width="24.500" height="19" fill="#bdbdbd" stroke="#e0e0e0"/>
<polygon points="1708,416.500 1725,409 1725,424" fill="#888" stroke="#222"/>
<rect x="1745.500" y="407" width="24.500" height="19" fill="#c8c8c8" stroke="#e0e0e0"/>
<polygon points="1747.500,410 1752,416.500 1747.500,423" fill="#ddd" stroke="#222"/><polygon points="1768,410 1763.500,416.500 1768,423" fill="#ddd" stroke="#222"/>
<text x="1757.700" y="422" class="c b" style="fill:#222;font-size:15px">?</text>
<rect x="1785.500" y="407" width="24.500" height="19" fill="#c8c8c8" stroke="#e0e0e0"/>
<polygon points="1787,410 1792,416.500 1787,423" fill="#ddd" stroke="#222"/><path d="M1797.500 410V423" stroke="#222" stroke-width="1.400"/><polygon points="1808,410 1803,416.500 1808,423" fill="#ddd" stroke="#222"/>

<rect x="1655" y="435" width="165" height="45" fill="#d0d0d0"/>
<g fill="#fafafa" stroke="#444"><circle cx="1668" cy="448" r="6"/><circle cx="1749" cy="448" r="6"/><circle cx="1668" cy="470" r="6"/><circle cx="1749" cy="470" r="6"/></g>
<circle cx="1749" cy="448" r="3" fill="#222"/>
<text x="1680" y="453" textLength="33" lengthAdjust="spacingAndGlyphs">Игнор</text>
<text x="1761" y="453" textLength="47" lengthAdjust="spacingAndGlyphs">Стереть</text>
<text x="1680" y="475" textLength="56" lengthAdjust="spacingAndGlyphs">Починить</text>
<text x="1761" y="475" textLength="56" lengthAdjust="spacingAndGlyphs">Обновить</text>
<rect x="1655" y="483" width="165" height="4" fill="#b8b8b8"/>
<rect x="1659.500" y="498.500" width="12" height="12" fill="#f6f6f6" stroke="#222"/>
<path d="M1662 504l3 3 5-8" fill="none" stroke="#222" stroke-width="1.200"/>
<text x="1677" y="509.500" class="b" style="fill:#14148c" textLength="25" lengthAdjust="spacingAndGlyphs">Grid</text>
<rect x="1713" y="492" width="106" height="20" fill="#0a1000"/>
<text x="1716" y="507.500" class="b" style="font-family:'Liberation Mono',monospace;font-size:17px;fill:#80801c;letter-spacing:1.300px">04:04:01</text>
<rect x="1713" y="492" width="106" height="20" fill="url(#dots)" opacity=".55"/>

<!-- bad blocks table -->
<rect x="1532.500" y="522" width="290.500" height="155" fill="#fff" stroke="#8a8a8a" stroke-width="1.400"/>
<path d="M1634 524V674M1694 524V674M1794 524V674" stroke="#e6e6e6"/>
<path d="M1535 565H1805M1535 583H1805M1535 601H1805M1535 619H1805M1535 637H1805M1535 655H1805M1535 673H1805" stroke="#efefef"/>
<rect x="1805" y="524" width="16" height="152" fill="#f0f0f0"/>
<rect x="1805" y="540" width="15" height="17" fill="#c8c8c8"/>
<path d="M1809 534l3.500-3.500 3.500 3.500M1809 666l3.500 3.500 3.500-3.500" fill="none" stroke="#555" stroke-width="1.500"/>
<text x="1540" y="540.500" textLength="51" lengthAdjust="spacingAndGlyphs">Start LBA</text>
<text x="1640" y="540.500" textLength="28" lengthAdjust="spacingAndGlyphs">Block</text>
<text x="1700" y="540.500" textLength="53" lengthAdjust="spacingAndGlyphs">Comment</text>
<text x="1540" y="561" textLength="55" lengthAdjust="spacingAndGlyphs">21889024</text><text x="1640" y="561" textLength="34" lengthAdjust="spacingAndGlyphs">16384</text><text x="1700" y="561" textLength="49" lengthAdjust="spacingAndGlyphs">Scan bad</text>
<text x="1540" y="579" textLength="55" lengthAdjust="spacingAndGlyphs">24723456</text><text x="1640" y="579" textLength="34" lengthAdjust="spacingAndGlyphs">16384</text><text x="1700" y="579" textLength="49" lengthAdjust="spacingAndGlyphs">Scan bad</text>
<text x="1540" y="597" textLength="55" lengthAdjust="spacingAndGlyphs">25444352</text><text x="1640" y="597" textLength="34" lengthAdjust="spacingAndGlyphs">16384</text><text x="1700" y="597" textLength="49" lengthAdjust="spacingAndGlyphs">Scan bad</text>
<text x="1540" y="615" textLength="55" lengthAdjust="spacingAndGlyphs">25509888</text><text x="1640" y="615" textLength="34" lengthAdjust="spacingAndGlyphs">16384</text><text x="1700" y="615" textLength="49" lengthAdjust="spacingAndGlyphs">Scan bad</text>
<text x="1540" y="633" textLength="55" lengthAdjust="spacingAndGlyphs">25526272</text><text x="1640" y="633" textLength="34" lengthAdjust="spacingAndGlyphs">16384</text><text x="1700" y="633" textLength="49" lengthAdjust="spacingAndGlyphs">Scan bad</text>
<text x="1540" y="651" textLength="55" lengthAdjust="spacingAndGlyphs">25591808</text><text x="1640" y="651" textLength="34" lengthAdjust="spacingAndGlyphs">16384</text><text x="1700" y="651" textLength="49" lengthAdjust="spacingAndGlyphs">Scan bad</text>
<text x="1540" y="669" textLength="55" lengthAdjust="spacingAndGlyphs">25657344</text><text x="1640" y="669" textLength="34" lengthAdjust="spacingAndGlyphs">16384</text><text x="1700" y="669" textLength="49" lengthAdjust="spacingAndGlyphs">Scan bad</text>

<!-- log -->
<rect x="676" y="684" width="1149" height="298" fill="#f3fdf3"/>
<rect x="676" y="684" width="1149" height="1.500" fill="#909090"/>
<path d="M746.500 686V982" stroke="#e0ece0"/>
<path d="M676 707.500H1808M676 727.500H1808M676 747.500H1808M676 767.500H1808M676 787.500H1808M676 807.500H1808M676 827.500H1808M676 847.500H1808M676 867.500H1808M676 887.500H1808M676 907.500H1808M676 927.500H1808M676 947.500H1808M676 967.500H1808" stroke="#e6f2e6"/>
<rect x="1808" y="686" width="17" height="296" fill="#f0f0f0"/>
<rect x="1808" y="941" width="16" height="23" fill="#c4c4c4"/>
<path d="M1812 698l3.500-3.500 3.500 3.500M1812 970l3.500 3.500 3.500-3.500" fill="none" stroke="#555" stroke-width="1.500"/>

<text x="684" y="702.200" class="tm" textLength="52" lengthAdjust="spacingAndGlyphs">23:07:20</text><text x="752" y="702.200" class="log" textLength="578" lengthAdjust="spacingAndGlyphs">Block 50970624 (26 GB) try Erase 16384 sectors (50970624..50987007)... fail: Устройство не готово</text>
<text x="684" y="722.200" class="tm" textLength="52" lengthAdjust="spacingAndGlyphs">23:07:23</text><text x="752" y="722.200" class="log" textLength="578" lengthAdjust="spacingAndGlyphs">Block 52412416 (27 GB) try Erase 16384 sectors (52412416..52428799)... fail: Устройство не готово</text>
<text x="684" y="742.200" class="tm" textLength="52" lengthAdjust="spacingAndGlyphs">23:07:26</text><text x="752" y="742.200" class="log" textLength="578" lengthAdjust="spacingAndGlyphs">Block 58032128 (30 GB) try Erase 16384 sectors (58032128..58048511)... fail: Устройство не готово</text>
<text x="684" y="762.200" class="tm" textLength="52" lengthAdjust="spacingAndGlyphs">23:07:33</text><text x="752" y="762.200" class="log" textLength="578" lengthAdjust="spacingAndGlyphs">Block 69697536 (36 GB) try Erase 16384 sectors (69697536..69713919)... fail: Устройство не готово</text>
<text x="684" y="782.200" class="tm" textLength="52" lengthAdjust="spacingAndGlyphs">23:07:33</text><text x="752" y="782.200" class="log" textLength="578" lengthAdjust="spacingAndGlyphs">Block 69713920 (36 GB) try Erase 16384 sectors (69713920..69730303)... fail: Устройство не готово</text>
<text x="684" y="802.200" class="tm" textLength="52" lengthAdjust="spacingAndGlyphs">23:07:38</text><text x="752" y="802.200" class="log" textLength="578" lengthAdjust="spacingAndGlyphs">Block 69779456 (36 GB) try Erase 16384 sectors (69779456..69795839)... fail: Устройство не готово</text>
<text x="684" y="822.200" class="tm" textLength="52" lengthAdjust="spacingAndGlyphs">23:07:38</text><text x="752" y="822.200" class="log" textLength="578" lengthAdjust="spacingAndGlyphs">Block 69795840 (36 GB) try Erase 16384 sectors (69795840..69812223)... fail: Устройство не готово</text>
<text x="684" y="842.200" class="tm" textLength="52" lengthAdjust="spacingAndGlyphs">23:07:38</text><text x="752" y="842.200" class="log" textLength="578" lengthAdjust="spacingAndGlyphs">Block 69812224 (36 GB) try Erase 16384 sectors (69812224..69828607)... fail: Устройство не готово</text>
<text x="684" y="862.200" class="tm" textLength="52" lengthAdjust="spacingAndGlyphs">23:07:39</text><text x="752" y="862.200" class="log" textLength="578" lengthAdjust="spacingAndGlyphs">Block 69828608 (36 GB) try Erase 16384 sectors (69828608..69844991)... fail: Устройство не готово</text>
<text x="684" y="882.200" class="tm" textLength="52" lengthAdjust="spacingAndGlyphs">23:07:42</text><text x="752" y="882.200" class="log" textLength="578" lengthAdjust="spacingAndGlyphs">Block 69844992 (36 GB) try Erase 16384 sectors (69844992..69861375)... fail: Устройство не готово</text>
<text x="684" y="902.200" class="tm" textLength="52" lengthAdjust="spacingAndGlyphs">23:07:45</text><text x="752" y="902.200" class="log" textLength="578" lengthAdjust="spacingAndGlyphs">Block 69861376 (36 GB) try Erase 16384 sectors (69861376..69877759)... fail: Устройство не готово</text>
<text x="684" y="922.200" class="tm" textLength="52" lengthAdjust="spacingAndGlyphs">23:07:48</text><text x="752" y="922.200" class="log" textLength="578" lengthAdjust="spacingAndGlyphs">Block 69894144 (36 GB) try Erase 16384 sectors (69894144..69910527)... fail: Устройство не готово</text>
<text x="684" y="942.200" class="tm" textLength="52" lengthAdjust="spacingAndGlyphs">23:07:49</text><text x="752" y="942.200" class="log" textLength="578" lengthAdjust="spacingAndGlyphs">Block 69910528 (36 GB) try Erase 16384 sectors (69910528..69926911)... fail: Устройство не готово</text>
</svg>
</body></html>
